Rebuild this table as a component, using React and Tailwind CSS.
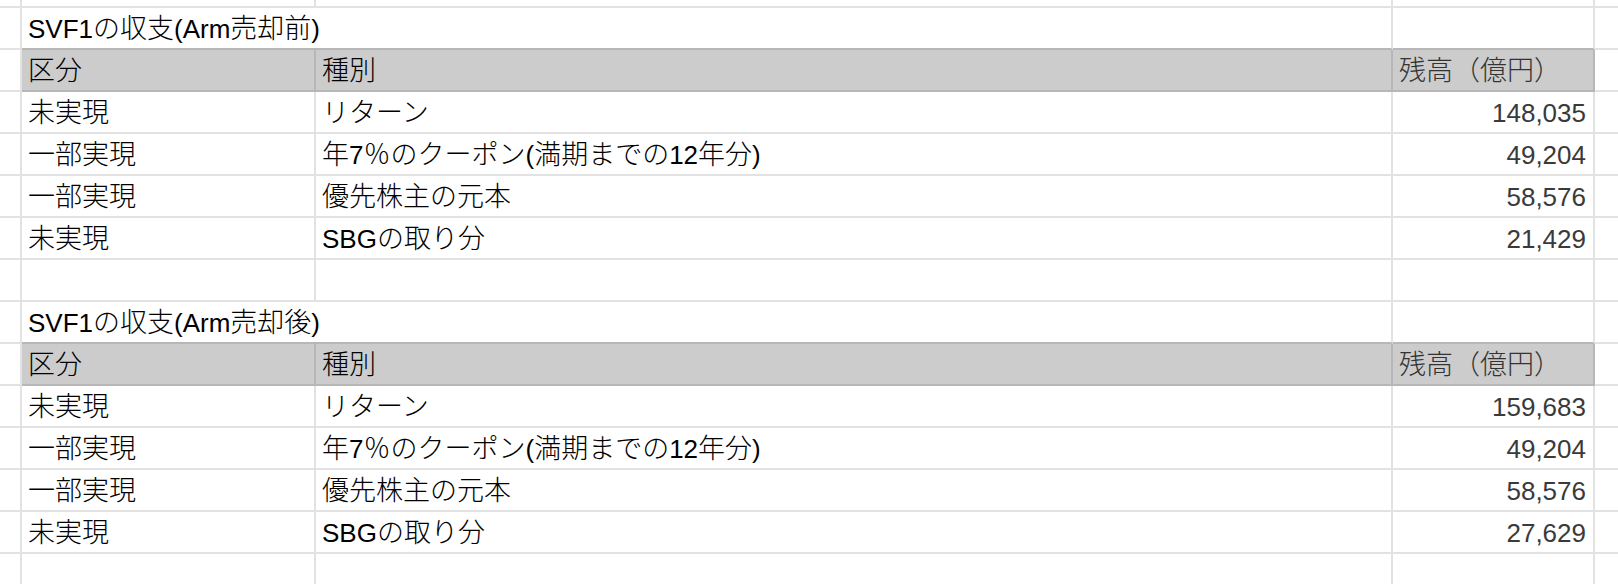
import React from "react";

const font = {
  fontFamily: '"Liberation Sans", Arial, "Noto Sans CJK JP", sans-serif',
};

const tables = [
  {
    title: "SVF1の収支(Arm売却前)",
    rows: [
      ["未実現", "リターン", "148,035"],
      ["一部実現", "年7％のクーポン(満期までの12年分)", "49,204"],
      ["一部実現", "優先株主の元本", "58,576"],
      ["未実現", "SBGの取り分", "21,429"],
    ],
  },
  {
    title: "SVF1の収支(Arm売却後)",
    rows: [
      ["未実現", "リターン", "159,683"],
      ["一部実現", "年7％のクーポン(満期までの12年分)", "49,204"],
      ["一部実現", "優先株主の元本", "58,576"],
      ["未実現", "SBGの取り分", "27,629"],
    ],
  },
];

// the Japanese glyphs in the sheet run a little wider and lighter than the Latin ones
function Jp({ text }) {
  if (!text) return null;
  const parts = text.split(/([\u3000-\u9fff\uff00-\uffef]+)/);
  return parts.map((p, i) =>
    i % 2 === 1 ? (
      <span key={i} className="text-[27px] font-light">
        {p}
      </span>
    ) : (
      p
    )
  );
}

function Cell({ className = "", text }) {
  return (
    <div
      className={
        "flex h-full shrink-0 items-end overflow-visible whitespace-nowrap border-r-2 border-b-2 px-[6px] pb-[4px] leading-[30px] " +
        className
      }
    >
      <span>
        <Jp text={text} />
      </span>
    </div>
  );
}

function BlankRow({ h = "h-[42px]" }) {
  return (
    <div className={"flex " + h}>
      <Cell className="w-[22px] border-[#e2e2e2]" />
      <Cell className="w-[294px] border-[#e2e2e2]" />
      <Cell className="w-[1077px] border-[#e2e2e2]" />
      <Cell className="w-[202px] border-[#e2e2e2]" />
      <div className="h-full flex-1 border-b-2 border-[#e2e2e2]" />
    </div>
  );
}

function TitleRow({ title }) {
  return (
    <div className="flex h-[42px]">
      <Cell className="w-[22px] border-[#e2e2e2]" />
      <Cell className="w-[1371px] border-r-[#e2e2e2] border-b-[#b7b7b7]" text={title} />
      <Cell className="w-[202px] border-r-[#e2e2e2] border-b-[#b7b7b7]" />
      <div className="h-full flex-1 border-b-2 border-[#e2e2e2]" />
    </div>
  );
}

function HeaderRow() {
  return (
    <div className="flex h-[42px]">
      <Cell className="w-[22px] border-[#e2e2e2]" />
      <Cell className="w-[294px] border-[#b7b7b7] bg-[#cccccc]" text="区分" />
      <Cell className="w-[1077px] border-[#b7b7b7] bg-[#cccccc]" text="種別" />
      <Cell className="w-[202px] border-[#b7b7b7] bg-[#cccccc] text-[#333333]" text="残高（億円）" />
      <div className="h-full flex-1 border-b-2 border-[#e2e2e2]" />
    </div>
  );
}

function DataRow({ row }) {
  return (
    <div className="flex h-[42px]">
      <Cell className="w-[22px] border-[#e2e2e2]" />
      <Cell className="w-[294px] border-[#e2e2e2]" text={row[0]} />
      <Cell className="w-[1077px] border-[#e2e2e2]" text={row[1]} />
      <Cell className="w-[202px] justify-end border-[#e2e2e2] pr-[7px] text-[#3a3a3a]" text={row[2]} />
      <div className="h-full flex-1 border-b-2 border-[#e2e2e2]" />
    </div>
  );
}

export default function App() {
  return (
    <div className="h-[584px] w-[1618px] overflow-hidden bg-white text-[26px] text-black" style={font}>
      <BlankRow h="h-[8px]" />
      {tables.map((t, i) => (
        <div key={i}>
          <TitleRow title={t.title} />
          <HeaderRow />
          {t.rows.map((r, j) => (
            <DataRow key={j} row={r} />
          ))}
          <BlankRow />
        </div>
      ))}
    </div>
  );
}
